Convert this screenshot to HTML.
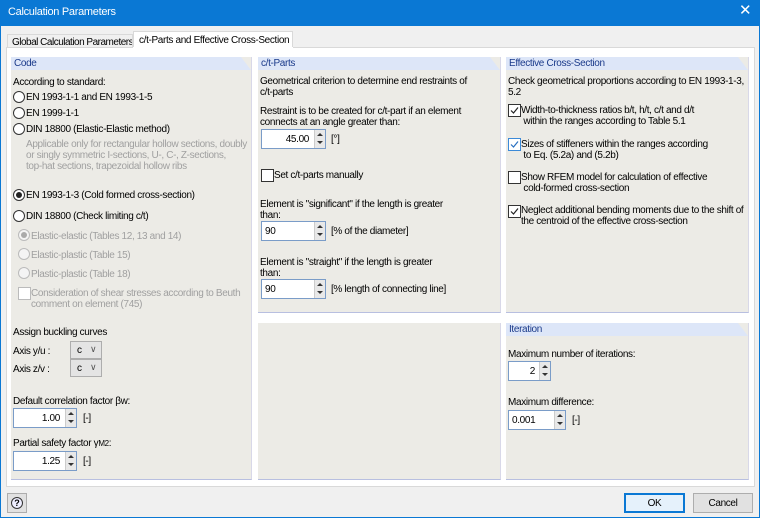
<!DOCTYPE html>
<html><head><style>
*{margin:0;padding:0;box-sizing:border-box}
body{width:760px;height:518px;background:#f0f0f0;font-family:"Liberation Sans",Tahoma,sans-serif;font-size:10px;letter-spacing:-0.35px;color:#000;position:relative;overflow:hidden;line-height:11px}
.a{position:absolute;white-space:nowrap}
.panel{position:absolute;background:#ecebe6;border-bottom:1px solid #b8bfe0;border-right:1px solid #d8d8e8}
.hd{position:absolute;left:0;top:0;right:0;height:13px;background:#dde6f8;color:#1a3a8a;padding:1px 0 0 3px;clip-path:polygon(0 0,calc(100% - 10px) 0,100% 13px,0 13px)}
.rb{position:absolute;width:12px;height:12px;border:1px solid #333;border-radius:50%;background:#fff}
.rb.on::after{content:"";position:absolute;left:2px;top:2px;width:6px;height:6px;border-radius:50%;background:#222}
.rb.dis{border-color:#bbb;background:#f4f4f4}
.rb.dis.on::after{background:#aaa}
.cb{position:absolute;width:13px;height:13px;border:1px solid #333;background:#fff}
.cb.dis{border-color:#bbb}
.cb svg{position:absolute;left:0px;top:0px}
.g{color:#a0a0a0}
.inp{position:absolute;height:20px;background:#fff;border:1px solid #7a9cc8;padding:4px 3px 0}
.spin{position:absolute;width:11px;height:18px;border-left:1px solid #ccc;background:#e8e8e8}
.spin::before{content:"";position:absolute;left:2px;top:3px;border:3px solid transparent;border-bottom:3px solid #333;border-top:0}
.spin::after{content:"";position:absolute;left:2px;top:11px;border:3px solid transparent;border-top:3px solid #333;border-bottom:0}
.sel{position:absolute;width:32px;height:18px;background:#e4e4e4;border:1px solid #adadad;padding:3px 0 0 6px}
.btn{position:absolute;height:20px;background:#e1e1e1;border:1px solid #adadad;text-align:center;padding-top:4px}
</style></head><body>
<div class="a" style="left:0;top:0;width:760px;height:26px;background:#0a78d4"></div>
<div class="a" style="left:0;top:0;width:1px;height:518px;background:#0a78d4"></div>
<div class="a" style="right:0;top:0;width:1px;height:518px;background:#0a78d4"></div>
<div class="a" style="left:0;bottom:0;width:760px;height:1px;background:#0a78d4"></div>
<div class="a" style="left:8px;top:7px;color:#fff;font-size:11px;letter-spacing:-0.3px">Calculation Parameters</div>
<div class="a" style="left:739px;top:5px;color:#fff;font-size:15px">✕</div>
<!-- tabs -->
<div class="a" style="left:7px;top:34px;width:126px;height:14px;border:1px solid #d9d9d9;border-bottom:0;background:#f0f0f0;padding:2px 0 0 4px;letter-spacing:-0.5px;overflow:hidden">Global Calculation Parameters</div>
<div class="a" style="left:133px;top:31px;width:160px;height:17px;border:1px solid #d9d9d9;border-bottom:0;background:#fff;padding:3px 0 0 5px">c/t-Parts and Effective Cross-Section</div>
<div class="a" style="left:6px;top:47px;width:749px;height:440px;background:#fff;border:1px solid #d9d9d9;border-top:0"></div>
<div class="a" style="left:6px;top:47px;width:127px;height:1px;background:#d9d9d9"></div>
<div class="a" style="left:293px;top:47px;width:462px;height:1px;background:#d9d9d9"></div>

<!-- Code panel -->
<div class="panel" style="left:11px;top:57px;width:241px;height:423px"><div class="hd">Code</div></div>
<div class="a" style="left:13px;top:77px">According to standard:</div>
<div class="rb" style="left:13px;top:91px"></div><div class="a" style="left:26px;top:92px">EN 1993-1-1 and EN 1993-1-5</div>
<div class="rb" style="left:13px;top:107px"></div><div class="a" style="left:26px;top:108px">EN 1999-1-1</div>
<div class="rb" style="left:13px;top:123px"></div><div class="a" style="left:26px;top:124px">DIN 18800 (Elastic-Elastic method)</div>
<div class="a g" style="left:26px;top:139px;line-height:11px">Applicable only for rectangular hollow sections, doubly<br>or singly symmetric I-sections, U-, C-, Z-sections,<br>top-hat sections, trapezoidal hollow ribs</div>
<div class="rb on" style="left:13px;top:189px"></div><div class="a" style="left:26px;top:190px">EN 1993-1-3 (Cold formed cross-section)</div>
<div class="rb" style="left:13px;top:210px"></div><div class="a" style="left:26px;top:211px">DIN 18800 (Check limiting c/t)</div>
<div class="rb dis on" style="left:18px;top:229px"></div><div class="a g" style="left:31px;top:231px">Elastic-elastic (Tables 12, 13 and 14)</div>
<div class="rb dis" style="left:18px;top:248px"></div><div class="a g" style="left:31px;top:250px">Elastic-plastic (Table 15)</div>
<div class="rb dis" style="left:18px;top:267px"></div><div class="a g" style="left:31px;top:269px">Plastic-plastic (Table 18)</div>
<div class="cb dis" style="left:18px;top:287px"></div><div class="a g" style="left:31px;top:288px">Consideration of shear stresses according to Beuth<br>comment on element (745)</div>
<div class="a" style="left:13px;top:327px">Assign buckling curves</div>
<div class="a" style="left:13px;top:346px">Axis y/u :</div><div class="sel" style="left:70px;top:341px">c<span style="position:absolute;left:19px;top:2px;color:#555;font-size:9px">∨</span></div>
<div class="a" style="left:13px;top:364px">Axis z/v :</div><div class="sel" style="left:70px;top:359px">c<span style="position:absolute;left:19px;top:2px;color:#555;font-size:9px">∨</span></div>
<div class="a" style="left:13px;top:396px">Default correlation factor βw:</div>
<div class="inp" style="left:13px;top:408px;width:64px;text-align:right;padding-right:16px">1.00<div class="spin" style="right:0;top:0"></div></div><div class="a" style="left:83px;top:413px">[-]</div>
<div class="a" style="left:13px;top:438px">Partial safety factor γ<span style="font-size:8px">M2</span>:</div>
<div class="inp" style="left:13px;top:451px;width:64px;text-align:right;padding-right:16px">1.25<div class="spin" style="right:0;top:0"></div></div><div class="a" style="left:83px;top:456px">[-]</div>

<!-- ct panel -->
<div class="panel" style="left:258px;top:57px;width:243px;height:256px"><div class="hd">c/t-Parts</div></div>
<div class="a" style="left:260px;top:76px">Geometrical criterion to determine end restraints of<br>c/t-parts</div>
<div class="a" style="left:260px;top:106px">Restraint is to be created for c/t-part if an element<br>connects at an angle greater than:</div>
<div class="inp" style="left:261px;top:129px;width:65px;text-align:right;padding-right:16px">45.00<div class="spin" style="right:0;top:0"></div></div><div class="a" style="left:331px;top:134px">[°]</div>
<div class="cb" style="left:261px;top:169px"></div><div class="a" style="left:274px;top:170px">Set c/t-parts manually</div>
<div class="a" style="left:260px;top:199px">Element is "significant" if the length is greater<br>than:</div>
<div class="inp" style="left:261px;top:221px;width:65px">90<div class="spin" style="right:0;top:0"></div></div><div class="a" style="left:331px;top:226px">[% of the diameter]</div>
<div class="a" style="left:260px;top:257px">Element is "straight" if the length is greater<br>than:</div>
<div class="inp" style="left:261px;top:279px;width:65px">90<div class="spin" style="right:0;top:0"></div></div><div class="a" style="left:331px;top:284px">[% length of connecting line]</div>

<!-- eff panel -->
<div class="panel" style="left:506px;top:57px;width:243px;height:256px"><div class="hd">Effective Cross-Section</div></div>
<div class="a" style="left:508px;top:76px">Check geometrical proportions according to EN 1993-1-3,<br>5.2</div>
<div class="cb" style="left:508px;top:104px"><svg width="11" height="11"><path d="M2 5.5 L4.5 8 L9 2.5" stroke="#222" fill="none" stroke-width="1.2"/></svg></div><div class="a" style="left:521px;top:105px">Width-to-thickness ratios b/t, h/t, c/t and d/t<br>&nbsp;within the ranges according to Table 5.1</div>
<div class="cb" style="left:508px;top:138px;border-color:#3c8ad8"><svg width="11" height="11"><path d="M2 5.5 L4.5 8 L9 2.5" stroke="#2a70c0" fill="none" stroke-width="1.2"/></svg></div><div class="a" style="left:521px;top:139px">Sizes of stiffeners within the ranges according<br>&nbsp;to Eq. (5.2a) and (5.2b)</div>
<div class="cb" style="left:508px;top:171px"></div><div class="a" style="left:521px;top:172px">Show RFEM model for calculation of effective<br>&nbsp;cold-formed cross-section</div>
<div class="cb" style="left:508px;top:205px"><svg width="11" height="11"><path d="M2 5.5 L4.5 8 L9 2.5" stroke="#222" fill="none" stroke-width="1.2"/></svg></div><div class="a" style="left:521px;top:205px">Neglect additional bending moments due to the shift of<br>the centroid of the effective cross-section</div>

<!-- lower -->
<div class="panel" style="left:258px;top:323px;width:243px;height:157px"></div>
<div class="panel" style="left:506px;top:323px;width:243px;height:157px"><div class="hd">Iteration</div></div>
<div class="a" style="left:508px;top:349px">Maximum number of iterations:</div>
<div class="inp" style="left:508px;top:361px;width:43px;text-align:right;padding-right:15px">2<div class="spin" style="right:0;top:0"></div></div>
<div class="a" style="left:508px;top:397px">Maximum difference:</div>
<div class="inp" style="left:508px;top:410px;width:58px">0.001<div class="spin" style="right:0;top:0"></div></div><div class="a" style="left:572px;top:415px">[-]</div>

<!-- bottom -->
<div class="a" style="left:7px;top:493px;width:20px;height:20px;border:1px solid #adadad;background:#e1e1e1"><div style="position:absolute;left:3px;top:3px;width:12px;height:12px;border-radius:50%;background:#eef;border:1px solid #333;font-size:9px;font-weight:bold;text-align:center;line-height:10px;letter-spacing:0">?</div></div>
<div class="btn" style="left:624px;top:493px;width:61px;border:2px solid #0a78d4;background:#e5f1fb;padding-top:3px">OK</div>
<div class="btn" style="left:693px;top:493px;width:60px">Cancel</div>
</body></html>
